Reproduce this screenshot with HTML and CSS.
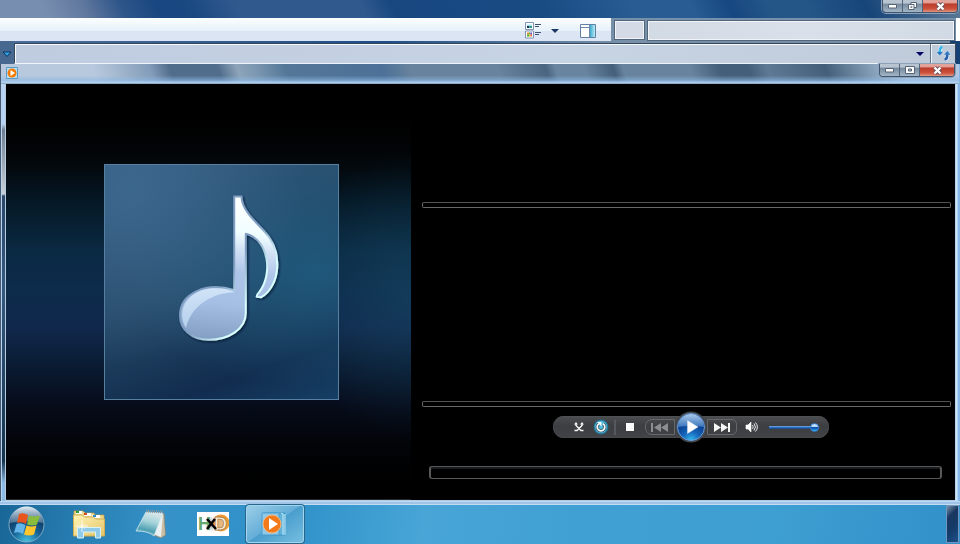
FILE: index.html
```
<!DOCTYPE html>
<html lang="en">
<head>
<meta charset="utf-8">
<title>Media player</title>
<link rel="stylesheet" href="styles.css">
</head>
<body>
<section class="explorer" aria-label="Explorer window">
  <header class="explorer-title">
    <div class="caption">
      <button class="cap" aria-label="Minimize"><svg width="9" height="5" viewBox="0 0 9 5"><path d="M.5.5h8v3.500h-8z" fill="#fff" stroke="#566478"/></svg></button>
      <button class="cap" aria-label="Restore"><svg width="11" height="10" viewBox="0 0 11 10"><path d="M4 1.500h5.500v5H4z" fill="#fff" stroke="#566478"/><path d="M1.500 3.500H7v5H1.500z" fill="#fff" stroke="#566478"/><path d="M3.500 5.300h1.800v1.500H3.500z" fill="#536074"/></svg></button>
      <button class="cap cap-close" aria-label="Close"><svg width="11" height="9" viewBox="0 0 11 9"><path d="M2.500 1.500l6 6m0-6l-6 6" stroke="#65545d" stroke-width="4"/><path d="M2.500 1.500l6 6m0-6l-6 6" stroke="#fff" stroke-width="2.300"/></svg></button>
    </div>
  </header>
  <div class="toolbar-row">
    <div class="toolbar">
      <button class="tool" aria-label="Change view"><svg width="17" height="17" viewBox="0 0 17 17"><path d="M.5.5h8v7h-8zM.5 9h8v7h-8z" fill="#fff" stroke="#8193b0"/><path d="M2 2.500h5v1.500H2z" fill="#a5e3ee"/><path d="M2 4h2.500v2H2z" fill="#123553"/><path d="M4.500 4H7v2H4.500z" fill="#299a93"/><path d="M2 10.500h2v2H2z" fill="#e78b35"/><path d="M4 10.500h1.500v2H4z" fill="#55a82b"/><path d="M5.500 10.500H7v2H5.500z" fill="#6745d8"/><path d="M2 12.500h2v2H2z" fill="#48ad2b"/><path d="M4 12.500h1.500v2H4z" fill="#e4c82f"/><path d="M5.500 12.500H7v2H5.500z" fill="#e15b45"/><path d="M10 2.500h6M10 4.500h4M10 10.500h6M10 12.500h4" stroke="#3f5370"/></svg></button>
      <button class="tool tool-arrow" aria-label="More views"><svg width="8" height="4" viewBox="0 0 8 4"><path d="M0 0h8L4 4z" fill="#1c3763"/></svg></button>
      <button class="tool" aria-label="Preview pane"><svg width="16" height="14" viewBox="0 0 16 14"><defs><linearGradient id="pane"><stop stop-color="#3ca8cf"/><stop offset="1" stop-color="#b9edf5"/></linearGradient></defs><path d="M.5.5h15v13H.5z" fill="#fff" stroke="#6280a6"/><path d="M10 1h5v12h-5z" fill="url(#pane)"/><path d="M1 3.500h8M9.500 1v12" stroke="#6d8aac"/></svg></button>
    </div>
    <div class="search-area">
      <button class="search-button" aria-label="Search options"></button>
      <input class="search-field" type="text" aria-label="Search">
    </div>
    <div class="edge"></div>
  </div>
  <div class="address-row">
    <button class="history" aria-label="Recent pages"><svg width="10" height="7" viewBox="0 0 10 7"><path d="M1 1h8L5 5.500z" fill="#30a5e1" stroke="#0b3263"/></svg></button>
    <div class="address">
      <input class="address-field" type="text" aria-label="Address">
      <button class="address-arrow" aria-label="Previous locations"><svg width="8" height="4" viewBox="0 0 8 4"><path d="M0 0h8L4 4z" fill="#050561"/></svg></button>
      <button class="refresh" aria-label="Refresh"><svg width="15" height="15" viewBox="0 0 15 15"><path d="M6.500 1Q3.500 1.500 3.800 6M8.500 13.500Q11.500 13 11.200 9" fill="none" stroke="#eef6fb" stroke-width="4"/><path d="M0 5.500h7.500L3.800 10zM7.500 9L11.300 4.500 15 9z" fill="#2874c0" stroke="#eef6fb" stroke-width=".5"/><path d="M6.500 1Q3.500 1.500 3.800 6" fill="none" stroke="#35b5e9" stroke-width="2.600"/><path d="M8.500 13.500Q11.500 13 11.200 8.500" fill="none" stroke="#245eaa" stroke-width="2.600"/></svg></button>
    </div>
  </div>
</section>

<main class="player">
  <header class="player-title">
    <svg class="app-icon" width="12" height="12" viewBox="0 0 12 12"><path d="M.5.5h11v11H.5z" fill="#b9dff0" stroke="#579dc7"/><circle cx="6" cy="6" r="4.500" fill="#f57b05"/><path d="M4.500 3v6L9 6z" fill="#fff"/></svg>
    <div class="caption caption-player">
      <button class="cap" aria-label="Minimize player"><svg width="9" height="5" viewBox="0 0 9 5"><path d="M.5.5h8v3.500h-8z" fill="#fff" stroke="#566478"/></svg></button>
      <button class="cap" aria-label="Maximize player"><svg width="10" height="8" viewBox="0 0 10 8"><path d="M.5.5h9v7h-9z" fill="#fff" stroke="#566478"/><path d="M3.500 3h3v2h-3z" fill="#bdc5cf" stroke="#536074"/></svg></button>
      <button class="cap cap-close" aria-label="Close player"><svg width="11" height="9" viewBox="0 0 11 9"><path d="M2.500 1.500l6 6m0-6l-6 6" stroke="#65545d" stroke-width="4"/><path d="M2.500 1.500l6 6m0-6l-6 6" stroke="#fff" stroke-width="2.300"/></svg></button>
    </div>
  </header>
  <div class="stage">
    <div class="art-pane">
      <svg class="art" viewBox="-168 -48 705 708" role="img" aria-label="Album art">
        <defs>
          <linearGradient id="note" gradientUnits="userSpaceOnUse" x1="220" y1="46" x2="170" y2="480"><stop stop-color="#fff"/><stop offset=".25" stop-color="#f0fdff"/><stop offset=".36" stop-color="#d3e2f5"/><stop offset=".52" stop-color="#aec5e9"/><stop offset=".75" stop-color="#a5bfe4"/><stop offset="1" stop-color="#839fc3"/></linearGradient>
          <linearGradient id="rim" x1="0" y1="0" x2="1" y2="1"><stop stop-color="#7e9dc2"/><stop offset=".52" stop-color="#809fc3"/><stop offset=".72" stop-color="#d8ffff"/></linearGradient>
          <linearGradient id="gloss" x1="0" y1="0" x2="0" y2="1"><stop stop-color="#d0e3f7"/><stop offset="1" stop-color="#b6d0ec"/></linearGradient>
          <filter id="shade" x="-20%" y="-20%" width="140%" height="140%"><feDropShadow dx="4" dy="4" stdDeviation="4" flood-color="#05172d" flood-opacity=".75"/></filter>
        </defs>
        <path filter="url(#shade)" fill="url(#note)" stroke="url(#rim)" stroke-width="6" stroke-linejoin="round" d="M223 47H245C246 85 278 115 312 150C374 214 362 319 305 352L291 351Q290 345 299 336C340 283 329 178 258 160V400C258 450 205 481 145 481C94 481 59 449 59 407C59 340 140 304 223 331Z"/>
        <path fill="url(#gloss)" d="M77 445C45 391 84 329 158 325Q198 323 226 337C158 338 93 376 77 445Z"/>
      </svg>
    </div>
    <div class="controls-pane">
      <section class="panel panel-top"></section>
      <section class="panel panel-list"></section>
      <div class="transport">
        <button class="ctl ctl-shuffle" aria-label="Shuffle"><svg width="10" height="10" viewBox="0 0 10 10"><path d="M2 1V3.500L7 8.500H9.500M8 1V3.500L3 8.500H.5" fill="none" stroke="#f2f2f2" stroke-width="1.500"/><path d="M0 2.500L2 0l2 2.500zM6 2.500L8 0l2 2.500z" fill="#f2f2f2"/></svg></button>
        <button class="ctl ctl-repeat" aria-label="Repeat"><svg width="16" height="16" viewBox="0 0 16 16"><circle cx="8" cy="8" r="7.500" fill="#1f7fa8" opacity=".8"/><circle cx="8" cy="8" r="6.200" fill="#4fb9dc"/><path d="M6 4.800A3.800 3.800 0 1 0 10 4.800" fill="none" stroke="#3b5663" stroke-width="3.200"/><path d="M6 4.800A3.800 3.800 0 1 0 10 4.800" fill="none" stroke="#fff" stroke-width="1.700"/><path d="M4 3h4.500v4.500z" fill="#fff"/></svg></button>
        <span class="divider"></span>
        <button class="ctl ctl-stop" aria-label="Stop"><span class="stop-mark"></span></button>
        <button class="ctl ctl-prev" aria-label="Previous"><svg width="18" height="9" viewBox="0 0 18 9"><path d="M0 0h2v9H0zM10 0v9L3 4.500zM17 0v9l-7-4.500z" fill="#8b8d90"/></svg></button>
        <button class="play" aria-label="Play"><svg width="32" height="32" viewBox="0 0 32 32"><defs><radialGradient id="orb" cx=".5" cy="1" r=".8"><stop stop-color="#36bdf1"/><stop offset=".4" stop-color="#1768be"/><stop offset="1" stop-color="#052b79"/></radialGradient><linearGradient id="shine" x2="0" y2="1"><stop stop-color="#a9c9ea"/><stop offset="1" stop-color="#3974bb"/></linearGradient></defs><circle cx="16" cy="16" r="15.500" fill="#43474f"/><circle cx="16" cy="16" r="13.500" fill="url(#orb)" stroke="#6a9cd4"/><path d="M3 16a13 13 0 0 1 26 0Q16 14 3 16Z" fill="url(#shine)"/><path d="M12.500 9.500v13L23 16Z" fill="#fff" stroke="#d7e2ef" stroke-width=".5"/></svg></button>
        <button class="ctl ctl-next" aria-label="Next"><svg width="18" height="9" viewBox="0 0 18 9"><path d="M1 0v9l7-4.500zM8 0v9l7-4.500zM15 0h2v9h-2z" fill="#f5f5f5"/></svg></button>
        <button class="ctl ctl-mute" aria-label="Mute"><svg width="14" height="12" viewBox="0 0 14 12"><path d="M1 4h2L6 1v10L3 8H1z" fill="#fff" stroke="#fff" stroke-width=".6"/><path d="M7.500 4q1.500 2 0 4M9 2.500q2.800 3.500 0 7M10.500 1.500q3.800 4.500 0 9" fill="none" stroke="#e9e9e9" stroke-width="1"/></svg></button>
        <input class="volume" type="range" min="0" max="100" value="100" aria-label="Volume">
      </div>
      <input class="seek" type="range" min="0" max="100" value="0" aria-label="Seek">
    </div>
  </div>
</main>

<nav class="taskbar" aria-label="Taskbar">
  <button class="start" aria-label="Start"><svg width="37" height="37" viewBox="0 0 37 37"><defs><radialGradient id="start" cx=".5" cy="1" r=".8"><stop stop-color="#44c5e4"/><stop offset=".55" stop-color="#155e92"/><stop offset="1" stop-color="#0c365e"/></radialGradient><linearGradient id="cap" x2="0" y2="1"><stop stop-color="#e3edf4"/><stop offset="1" stop-color="#7798b2" stop-opacity=".6"/></linearGradient></defs><circle cx="18.500" cy="18.500" r="17.500" fill="url(#start)" stroke="#7fabc5"/><path d="M2 17a16.500 16.500 0 0 1 33 0Q18 13 2 17Z" fill="url(#cap)"/><path d="M11 8q4-2 9 1l-2 9q-4-3-9-1z" fill="#e9551d"/><path d="M21 9.500q5 2 11 0l-3 9q-5 2-10 0z" fill="#8abc3c"/><path d="M8.500 18q4-2 9 1l-2.500 9q-4-3-9-1z" fill="#64b5ea"/><path d="M18.500 19.500q5 2 10 0l-2.500 9q-5 2-10 0z" fill="#ffc52d"/></svg></button>
  <button class="task" aria-label="File explorer"><svg width="34" height="30" viewBox="0 0 34 30"><defs><linearGradient id="folder" x2="1" y2="1"><stop stop-color="#fff5b5"/><stop offset="1" stop-color="#e4c468"/></linearGradient></defs><path d="M2 8V2h9l2 2h9l1 2h9v5H2z" fill="#f0d98c" stroke="#c29c42" stroke-width=".7"/><path d="M4 2h6v3H4z" fill="#fff"/><path d="M4 2h3v2H4z" fill="#2c9f36"/><path d="M12 4h7v3h-7z" fill="#fff"/><path d="M12 4h3v2h-3z" fill="#d84825"/><path d="M20 6h8v3h-8z" fill="#fff"/><path d="M21 6h3v2h-3z" fill="#268ed0"/><path d="M1.500 6h9l2 2h9l2 2h9v17h-31z" fill="url(#folder)" stroke="#d2ae53"/><path d="M5.500 29V18.500h23V29h-5v-6h-12v6z" fill="#8fcbe8" stroke="#d7f2fb"/><path d="M10 11v12M4 17h12" stroke="#fff" stroke-width=".8"/><path d="M7 14l6 6M13 14l-6 6" stroke="#fff" stroke-width=".5"/></svg></button>
  <button class="task" aria-label="Notepad"><svg width="34" height="30" viewBox="0 0 34 30"><defs><linearGradient id="pad" x1=".6" x2=".3" y2="1"><stop stop-color="#d9e8ea"/><stop offset=".4" stop-color="#a5d3da"/><stop offset=".75" stop-color="#4fa0b3"/><stop offset="1" stop-color="#9ad8e0"/></linearGradient></defs><path d="M30 4l1.500 22-4.500 3-10-4Z" fill="#c9bda3" stroke="#8e8264" stroke-width=".6"/><path d="M29 4l-2 24-10-4Z" fill="#e9f1f2"/><path d="M12 3L2 22q13 0 18 5L29 4z" fill="url(#pad)" stroke="#dceff2" stroke-width=".7"/><path d="M12 2l18 1" stroke="#8b959b" stroke-width="3" stroke-dasharray="1 1"/></svg></button>
  <button class="task" aria-label="HxD"><svg width="32" height="24" viewBox="0 0 32 24"><defs><radialGradient id="smoke"><stop stop-color="#777"/><stop offset="1" stop-color="#fff" stop-opacity="0"/></radialGradient></defs><path d="M0 0h32v24H0z" fill="#fff"/><circle cx="15" cy="12" r="10" fill="url(#smoke)"/><circle cx="24" cy="11" r="7" fill="#e5b77f" stroke="#f09a35" stroke-width="3"/><text class="hxd" x="1" y="18" fill="#65a869">H</text><text class="hxd" x="17" y="18" fill="#fff2df" stroke="#a98353" stroke-width=".8">D</text><path d="M10 7l9 10M18 7l-8 10" stroke="#000" stroke-width="2.500"/></svg></button>
  <button class="task task-active" aria-label="Media player"><svg width="30" height="26" viewBox="0 0 30 26"><path d="M4 2h21v22H4z" fill="#62b3dc" stroke="#3b92c2"/><path d="M2 2h17v22H2z" fill="#8fc8e8" stroke="#4c9fcf"/><path d="M21 2l2 1v21M25 3v21" fill="none" stroke="#c7edfa"/><circle cx="12" cy="13" r="9" fill="#f47918" stroke="#f7b77b"/><path d="M9 7v12l9-6z" fill="#fff"/></svg></button>
  <button class="show-desktop" aria-label="Show desktop"></button>
</nav>
</body>
</html>
```
FILE: styles.css
```
* { box-sizing: border-box; }
html, body { min-height: 100%; }
body {
  margin: 0;
  min-height: 100vh;
  display: flex;
  flex-direction: column;
  background: #1b4d83;
  font-family: "Liberation Sans", Arial, sans-serif;
}
button, input { border: 0; padding: 0; margin: 0; background: none; font: inherit; }
button { display: flex; align-items: center; justify-content: center; }
svg { display: block; flex: none; }

.explorer-title {
  height: 18px;
  display: flex;
  justify-content: flex-end;
  padding-right: 2px;
  background: linear-gradient(65deg, #788eb0 0 5%, #62799f 9%, #2f568a 13%, #184680 17%, #1a4881 20%, #30598e 25% 38%, #184780 41%, #194b83 56%, #285c93 66% 72%, #174780 76%, #245688 80% 84%, #174579 90%, #5d7b98);
}
.caption {
  display: flex;
  height: 13px;
  border: 1px solid #405570;
  border-top: 0;
  border-radius: 0 0 4px 4px;
  box-shadow: 0 0 0 1px #8ba1b9;
  overflow: hidden;
}
.cap {
  width: 20px;
  background: linear-gradient(#b8c5d1 0 25%, #788b9e 35%, #a3b6c6);
  border-right: 1px solid #52647b;
}
.cap-close {
  width: 34px;
  border-right: 0;
  background: linear-gradient(#e2a39a 0 20%, #bd3d2b 35%, #cc533c 75%, #e39782);
}

.toolbar-row {
  display: grid;
  grid-template-columns: minmax(0, 611fr) minmax(0, 345fr) minmax(0, 4fr);
  height: 23px;
}
.toolbar {
  display: flex;
  align-items: center;
  justify-content: flex-end;
  gap: 9px;
  padding: 2px 15px 0 0;
  background: linear-gradient(#fbfeff, #e7f1fa 56%, #dbe5f4 57%);
}
.tool-arrow { margin-right: 12px; }
.search-area {
  display: flex;
  gap: 2px;
  padding: 2px 1px 0 3px;
  background: #7790aa;
}
.search-button, .search-field {
  border: 1px solid #53677c;
  box-shadow: inset 0 0 0 1px #f0f4f8;
}
.search-button { width: 31px; height: 20px; background: #d4dbe6; }
.search-field { flex: 1; min-width: 0; height: 21px; background: linear-gradient(90deg, #d2dae4, #dae0e9, #d1dae4); }
.edge { background: #fff; }

.address-row {
  display: flex;
  height: 23px;
  padding-right: 4px;
  background: linear-gradient(90deg, #4d6e9b, #1d4f88 40%, #7891a9 65%, #768da5 99%, #164174 99%);
}
.history { width: 14px; padding-top: 4px; background: #47688f; }
.address {
  flex: 1;
  display: flex;
  margin-top: 2px;
  border: 1px solid #35455a;
  border-bottom-color: #edf5fb;
  background: linear-gradient(90deg, #bfcbdf, #c7d4e4 60%, #bfcad9);
  box-shadow: inset 1px 1px #f5faff;
}
.address-field { flex: 1; min-width: 0; }
.address-arrow { width: 20px; }
.refresh { width: 25px; border-left: 1px solid #62738a; box-shadow: inset 1px 1px #eef5fb; }

.player {
  flex: 1;
  display: flex;
  flex-direction: column;
  padding: 0 5px 5px 6px;
  background:
    linear-gradient(#c9e8fb, #91b5df 50%, #d3e9fb) bottom / 100% 4px no-repeat,
    linear-gradient(#b9d4f3 0 60px, #6f7f90 66px, #c9cfd6 130px, #2a4767 132px, #36597f 50%, #17344c 90%, #8cbce6 95%) 2px 0 / 3px 100% no-repeat,
    linear-gradient(90deg, #465a70 0 1px, #b9d4f3 1px 5px, #b5cbe0 5px 6px, #a8cbea calc(100% - 5px), #d8efff calc(100% - 3px), #86b7e8 calc(100% - 2px));
}
.player-title {
  height: 20px;
  margin: 0 -4px 0 -5px;
  padding: 0 4px 0 5px;
  display: flex;
  justify-content: space-between;
  align-items: flex-start;
  border-bottom: 1px solid #8facc7;
  background:
    linear-gradient(transparent 60%, #8cb7e299 85%, #b4d4f4),
    linear-gradient(72deg, #b8c9de 0 10%, #9fb4cb 13%, #829bb8 16%, #506d8c 18% 23%, #8da4b9 25%, #7a96b0 27%, #547798 30%, #4c7097 40%, #68839d 43% 52%, #496580 57%, #68849f 58% 61%, #435f79 64%, #67839d 65% 72%, #435f79 75% 78%, #5d7994 80%, #435f79 86%, #b2c9e1 94%);
}
.app-icon { margin-top: 3px; }
.stage {
  flex: 1;
  display: grid;
  grid-template-columns: minmax(0, 405fr) minmax(0, 544fr);
  background: #000;
  min-height: 416px;
}
.art-pane {
  padding: 80px 0 99px 98px;
  border-bottom: 1px solid #242628;
  background:
    radial-gradient(ellipse 30% 34% at 100% 51%, #1b547066, transparent),
    linear-gradient(#000 0 8%, #020304 14%, #03090e 20%, #051927 29%, #0a2942 40%, #0d2b4b 50%, #10284c 59%, #0a1b32 68%, #060b19 78%, #020407 87%, #000 96%);
}
.art {
  width: 235px;
  height: 236px;
  border: 1px solid #577f9f;
  background:
    radial-gradient(ellipse at 12% 12%, #406b92cc, transparent 60%),
    radial-gradient(ellipse at 90% 45%, #1f587b, transparent 65%),
    linear-gradient(160deg, #315a7e, #254866 48%, #112c4e 82%, #153f65);
}
.controls-pane {
  display: flex;
  flex-direction: column;
  padding: 0 4px 21px 11px;
}
.panel { display: flex; align-items: flex-end; }
.panel::after {
  content: "";
  flex: 1;
  height: 4px;
  border: 1px solid #66686a;
  border-top-color: #505254;
  border-radius: 2px;
}
.panel-top { flex: 124; }
.panel-list { flex: 199; }
.transport {
  align-self: center;
  display: flex;
  align-items: center;
  width: 276px;
  height: 22px;
  margin: 9px 0 28px 9px;
  padding: 0 10px 0 20px;
  border-radius: 11px;
  background: linear-gradient(#4b4e51, #3c3e41 45%, #414346);
  box-shadow: inset 0 0 1px #77797c;
}
.ctl { flex: none; height: 16px; }
.ctl-shuffle { width: 12px; margin-right: 8px; }
.ctl-repeat { width: 16px; }
.divider { width: 2px; height: 15px; margin: 0 10px 0 5px; background: #555860; }
.ctl-stop { width: 8px; margin-right: 11px; }
.stop-mark { width: 8px; height: 8px; background: #fafafa; }
.ctl-prev, .ctl-next { width: 30px; border: 1px solid #65676a; }
.ctl-prev { border-radius: 7px 0 0 7px; }
.ctl-next { border-radius: 0 5px 5px 0; }
.play { flex: none; width: 32px; height: 32px; }
.ctl-mute { width: 14px; margin: 0 10px 0 8px; }
.volume {
  appearance: none;
  flex: 1;
  min-width: 0;
  height: 10px;
  background: linear-gradient(#82aad8, #296fc4, #153f78) center / 100% 3px no-repeat;
}
.volume::-webkit-slider-thumb {
  appearance: none;
  width: 9px;
  height: 9px;
  border: 1px solid #3780d0;
  border-radius: 5px;
  background: linear-gradient(#bfdfff 0 35%, #0d54af 45% 60%, #35bdf6);
}
.seek {
  appearance: none;
  height: 13px;
  margin: 0 9px 0 7px;
  border: 1px solid #57585a;
  border-width: 1px 2px;
  border-radius: 3px;
  background: #000;
  box-shadow: inset 0 2px #1b1c1e;
}
.seek::-webkit-slider-thumb { appearance: none; width: 0; height: 0; }

.taskbar {
  display: flex;
  gap: 4px;
  height: 39px;
  padding-right: 1px;
  background: linear-gradient(100deg, #196698, #287fb3 9%, #3692c8 17%, #2e91c9 30%, #48a5d6 44%, #41a0d3 60%, #3e9fd2 80%, #3190c9);
}
.start { width: 56px; justify-content: flex-start; padding-left: 8px; }
.task { width: 58px; height: 38px; }
.task-active {
  border: 1px solid #a5d5ec;
  border-radius: 3px;
  box-shadow: 0 0 0 1px #28678d;
  background: linear-gradient(145deg, #9bcde7, #65aed8 48%, #4a9ecd 50%, #76bee0);
}
.hxd { font: bold 18px "Liberation Sans", sans-serif; }
.show-desktop {
  width: 13px;
  height: 38px;
  margin-left: auto;
  border: 1px solid #7297bc;
  background: linear-gradient(135deg, #7891a8, #18365f 28%, #153b69 60%, #1d508b);
}
```
